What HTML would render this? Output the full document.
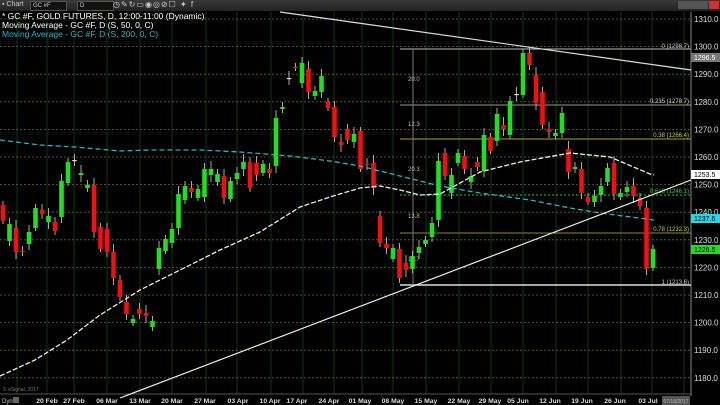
<!DOCTYPE html><html><head><meta charset="utf-8"><style>
body{margin:0;background:#000;width:720px;height:405px;overflow:hidden;font-family:"Liberation Sans",sans-serif}
#tb{position:absolute;left:0;top:0;width:720px;height:11px;background:linear-gradient(#3a3a3a,#222);}
.t{position:absolute;font-size:8.5px;white-space:nowrap}
</style></head><body>
<svg id="s" width="720" height="405" style="position:absolute;left:0;top:0" xmlns="http://www.w3.org/2000/svg"></svg>
<div id="tb">
<div class="t" style="left:2px;top:1px;color:#ccc;font-size:7px">▪ Chart</div>
<div style="position:absolute;left:30px;top:1px;width:33px;height:8px;background:#111;border:1px solid #555;color:#ccc;font-size:6px;line-height:8px;padding-left:2px">GC #F</div>
<div style="position:absolute;left:77px;top:1px;width:33px;height:8px;background:#111;border:1px solid #555;color:#ccc;font-size:6px;line-height:8px;padding-left:2px">D</div>
<div class="t" style="left:113px;top:0px;color:#ccc;font-size:8px;letter-spacing:1px">◷✎↻▭◉◎⊘☐ ✦ f</div>
<div style="position:absolute;left:678px;top:1px;width:30px;height:8px;background:#555"></div>
<div style="position:absolute;left:709px;top:1px;width:10px;height:8px;background:#c33"></div>
</div>
<div class="t" style="left:2px;top:11px;color:#fff">* GC #F, GOLD FUTURES, D, 12:00-11:00 (Dynamic)</div>
<div class="t" style="left:2px;top:20px;color:#fff">Moving Average - GC #F, D (S, 50, 0, C)</div>
<div class="t" style="left:2px;top:29px;color:#1fb8c4">Moving Average - GC #F, D (S, 200, 0, C)</div>
<script>
const s=document.getElementById('s');let h='';
const L=(x1,y1,x2,y2,c,w,d)=>h+=`<line x1="${x1}" y1="${y1}" x2="${x2}" y2="${y2}" stroke="${c}" stroke-width="${w||1}" ${d?`stroke-dasharray="${d}"`:''}/>`;
const T=(x,y,t,c,sz,a,b)=>h+=`<text x="${x}" y="${y}" fill="${c}" font-size="${sz||8}" font-family="Liberation Sans" ${a?`text-anchor="${a}"`:''} ${b?'font-weight="bold"':''}>${t}</text>`;
const vx=[17,47,74,107,140,172,206,237,271,303,334,362,393,426,459,491,523,556,588,621,652,684];
vx.forEach(x=>L(x,12,x,394,'#0f3a0f',1));
for(let p=1310;p>=1180;p-=10){let y=19+(1310-p)*2.76;L(0,y,691,y,'#6a6a10',0.8,'2,2');T(694,y+3,p+'.0','#ddd',8);}
L(691,12,691,396,'#888',1);L(0,394,691,394,'#555',1);
const lab=['20 Feb','27 Feb','06 Mar','13 Mar','20 Mar','27 Mar','03 Apr','10 Apr','17 Apr','24 Apr','01 May','08 May','15 May','22 May','29 May','05 Jun','12 Jun','19 Jun','26 Jun','03 Jul'];
const lx=[47,74,107,140,172,205,238,270,297,329,360,393,426,459,490,518,550,582,615,648];
lab.forEach((t,i)=>T(lx[i],403,t,'#ddd',6.8,'middle',1));
h+='<rect x="662" y="396" width="28" height="9" fill="#555"/>';T(676,403,'07/18/2017','#bbb',5,'middle');
T(2,403,'Dyn','#ccc',6);h+='<rect x="13" y="397" width="6" height="6" fill="#666"/>';
T(3,391,'© eSignal, 2017','#777',5);
L(400,49,691,49,'#bbb',1);L(400,105,691,105,'#999',1);L(400,139,691,139,'#aaa520',1);
L(400,195,691,195,'#2c2',1,'2,2');L(400,233,691,233,'#8a8a20',1);L(400,285,691,285,'#ddd',1.5);L(413,49,413,285,'#777',1);
[[78,'20.0'],[123,'12.3'],[168,'20.3'],[215,'13.8'],[258,'17.7']].forEach(a=>T(408,a[0]+3,a[1],'#bbb',6));
T(689,48,'0 (1298.7)','#ccc',6,'end');T(689,103,'0.235 (1278.7)','#ccc',6,'end');T(689,137,'0.38 (1266.4)','#cc2',6,'end');
T(689,193,'0.618 (1246.1)','#3c3',6,'end');T(689,231,'0.78 (1232.3)','#cc2',6,'end');T(689,284,'1 (1213.6)','#ccc',6,'end');
const c=[[205,221,0],[224,241,1],[228,252,0],[251,252,0],[232,244,1],[208,228,1],[210,214,0],[216,222,1],[222,231,0],[181,217,1],[162,183,1],[160,161,2],[173,175,1],[185,188,1],[185,232,0],[227,249,0],[229,252,0],[252,278,0],[280,297,0],[302,314,0],[319,323,1],[309,314,0],[313,316,0],[321,327,1],[248,269,1],[239,251,1],[229,243,1],[194,228,1],[186,200,1],[188,192,0],[189,198,1],[169,197,1],[169,175,1],[174,182,1],[176,198,0],[181,199,1],[173,179,1],[162,169,1],[162,188,0],[163,175,0],[164,173,1],[169,173,0],[118,166,1],[107,109,1],[78,79,2],[67,68,0],[63,83,1],[69,92,0],[91,96,1],[76,92,1],[102,108,0],[107,137,0],[142,145,0],[129,140,0],[134,142,1],[131,169,0],[164,165,0],[163,188,0],[216,243,0],[244,248,0],[248,259,1],[249,278,0],[263,270,0],[256,269,1],[247,253,1],[240,244,1],[223,237,1],[161,220,1],[153,176,0],[175,193,1],[153,163,1],[156,169,0],[176,182,1],[162,167,0],[135,171,1],[137,151,0],[114,141,1],[125,129,0],[101,135,1],[94,95,2],[53,95,1],[53,65,0],[75,103,0],[92,125,0],[129,132,0],[133,136,1],[113,133,1],[149,172,0],[167,169,1],[169,193,0],[197,202,0],[196,202,1],[186,195,1],[168,182,1],[163,194,0],[193,197,1],[187,192,1],[186,196,0],[198,206,0],[208,269,0],[249,268,1]];
c.forEach((k,i)=>{let x=3+6.5*i;let a=Math.min(k[0],k[1]),b=Math.max(k[0],k[1]);let w=4+((i*7)%5);
L(x,a-w,x,b+w-1,'#aaa',1);let col=k[2]==1?'#1fe01f':k[2]==0?'#f01010':'#ddd';
h+=`<rect x="${x-2.3}" y="${a}" width="4.6" height="${Math.max(1.2,b-a)}" fill="${col}"/>`;});
h+='<polyline fill="none" stroke="#20b8c8" stroke-width="1.3" stroke-dasharray="5,3" points="0,140 40,145 75,147 120,151 150,150 200,150 240,152 290,156 330,161 360,166 400,176 440,186 480,193 530,200 570,208 600,213 654,220"/>';
h+='<polyline fill="none" stroke="#eee" stroke-width="1.3" stroke-dasharray="5,2" points="0,376 35,360 67,340 100,315 140,290 180,270 220,250 260,232 300,207 330,197 360,188 380,186 400,190 420,195 440,194 460,183 480,172 520,162 570,153 610,157 650,174 654,175"/>';
L(120,398,691,180,'#eee',1.2);L(280,12,691,70,'#ddd',1.2);
const rb=(y,t,bg,fg)=>{h+=`<rect x="691" y="${y-4}" width="29" height="9" fill="${bg}"/>`;T(694,y+3,t,fg,7);};
rb(57,'1296.5','#777','#fff');rb(174,'1253.5','#fff','#000');rb(218,'1237.6','#20d8e8','#000');rb(249,'1226.5','#2d2','#000');
s.innerHTML=h;
</script>
</body></html>
